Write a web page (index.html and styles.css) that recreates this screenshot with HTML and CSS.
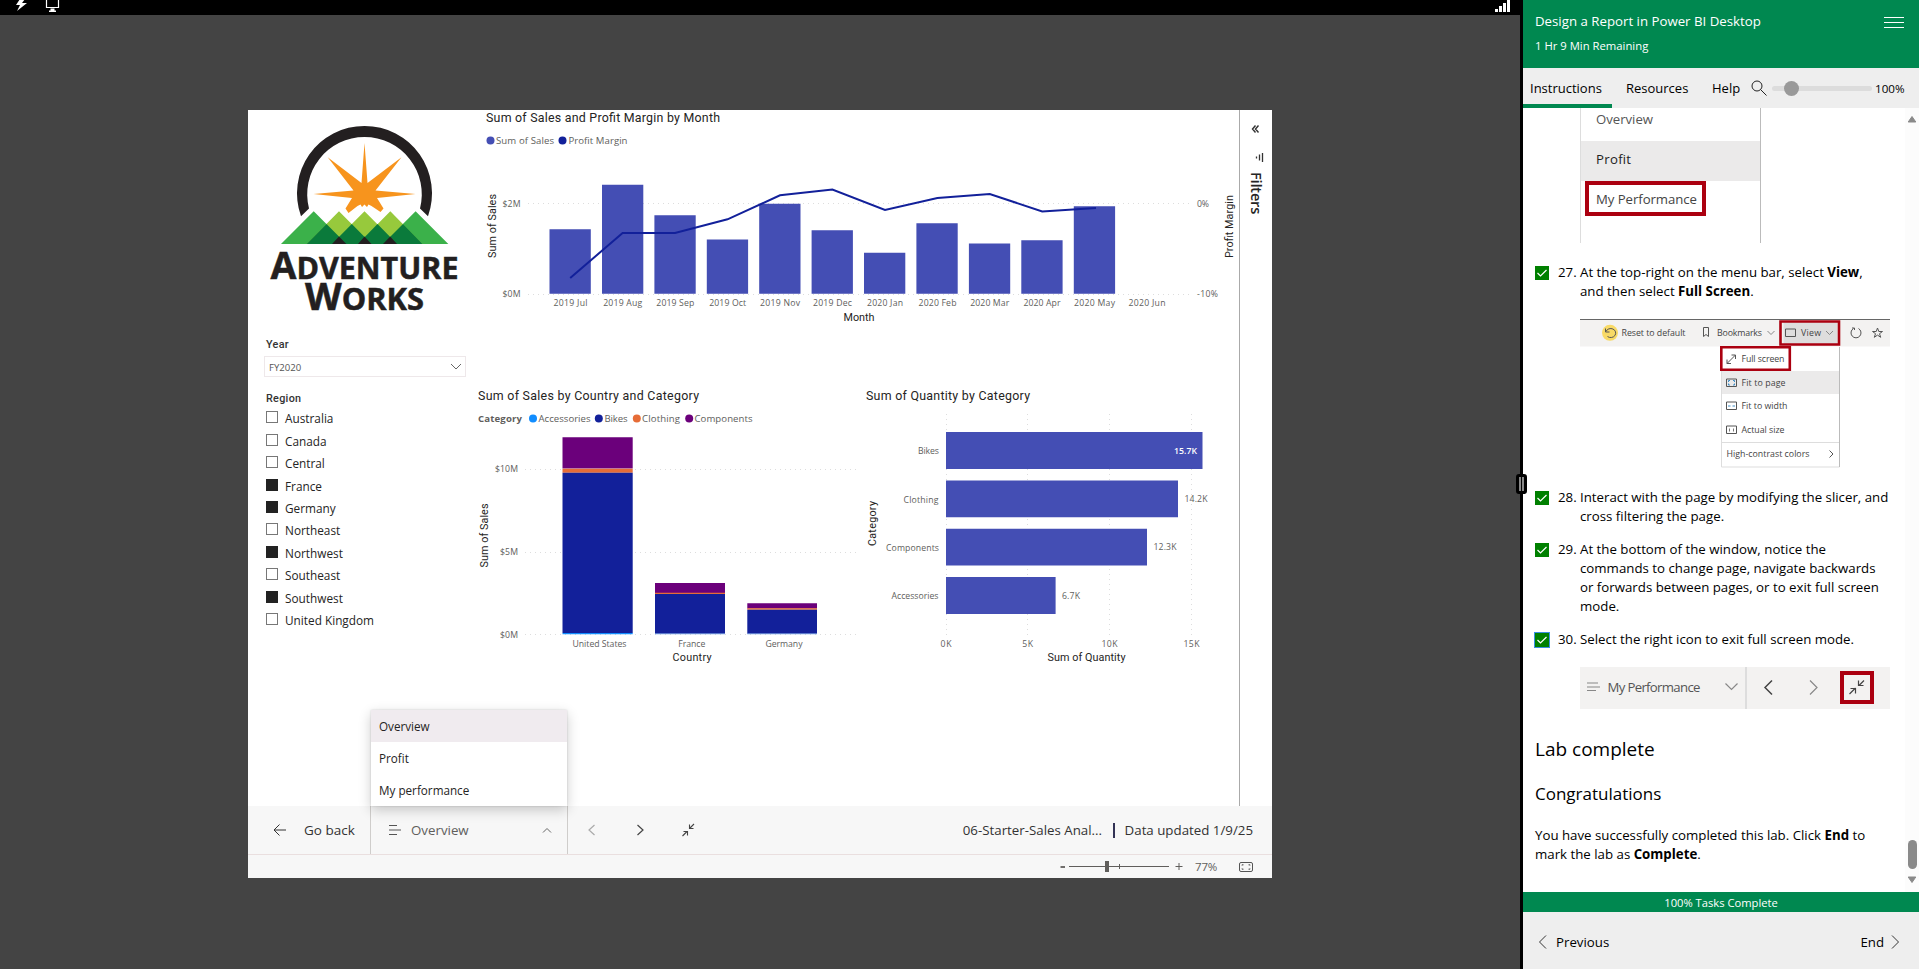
FILE: index.html
```html
<!DOCTYPE html>
<html lang="en">
<head>
<meta charset="utf-8">
<title>Design a Report in Power BI Desktop</title>
<link rel="stylesheet" href="styles.css">
</head>
<body>
<div class="app">
  <section class="machine">
    <div class="machine-bar">
      <svg class="machine-icons" width="60" height="15" viewBox="0 0 60 15">
        <path d="M20 -1 L16 5 H20 L17 11 L27 3 H22 L25 -1Z" fill="#fff"/>
        <path d="M46.5 -1 V7.5 H58.5 V-1" fill="none" stroke="#fff" stroke-width="1.2"/>
        <path d="M50.5 8.500h4v2h1.500v1.500h-7v-1.500h1.500z" fill="#fff"/>
      </svg>
      <svg class="signal" width="18" height="15" viewBox="0 0 18 15" fill="#fff">
        <path d="M1 9h3v3H1zM5 6h3v6H5zM9 3h3v9H9zM13 0h3v12H13z"/>
      </svg>
    </div>
    <div class="desktop">
      <main class="window">
        <div class="report">
          <div class="page">
            <div class="side">
              <svg class="logo" width="230" height="225" viewBox="248 110 230 225" role="img" aria-label="Adventure Works">
                <path d="M301 216.300A67.500 67.500 0 1 1 428 216.300L420 208.500A57.300 57.300 0 1 0 309 208.500Z" fill="#231f20"/>
                <path d="M364.500 143L367.500 183L401.500 157.300L375.500 190.500L415.500 194L377 198L383.500 208.500L380.500 212L371.500 206L368.500 204.500L367 207L364.500 204.500L362 207L360.500 204.500L357.500 206L348.500 213L345.500 208.500L352 198L313.500 194L353.500 190.500L327.700 157.300L361.500 183Z" fill="#f7941d"/>
                <path d="M281 244L313.700 211.300L346.400 244ZM383 244L415.600 211.300L448.300 244Z" fill="#3bb14a"/>
                <path d="M306.700 244L339 211.300L371.500 244ZM332 244L364.500 211.300L397 244ZM358 244L390.300 211.300L422.500 244Z" fill="#97c93c"/>
                <path d="M306.700 244L326.500 224L346.400 244ZM332 244L351.800 224L371.500 244ZM358 244L377.500 224L397 244ZM383 244L403 224L422.500 244Z" fill="#0a7a3b"/>
                <path d="M332 244L339 236.500L346.400 244ZM358 244L364.500 236.500L371.500 244ZM383 244L390.200 236.500L397 244Z" fill="#231f20"/>
                <g class="brand">
                  <text x="270.500" y="278.500" textLength="188" lengthAdjust="spacingAndGlyphs"><tspan class="cap">A</tspan>DVENTURE</text>
                  <text x="305" y="309.500" textLength="119" lengthAdjust="spacingAndGlyphs"><tspan class="cap">W</tspan>ORKS</text>
                </g>
              </svg>
              <div class="slicer-title">Year</div>
              <div class="dropdown"><span>FY2020</span>
                <svg width="12" height="8" viewBox="0 0 12 8"><path d="M1 1l5 5 5-5" fill="none" stroke="#666"/></svg>
              </div>
              <div class="slicer-title region">Region</div>
              <ul class="regions">
                <li><i></i>Australia</li><li><i></i>Canada</li><li><i></i>Central</li>
                <li><i class="on"></i>France</li><li><i class="on"></i>Germany</li><li><i></i>Northeast</li>
                <li><i class="on"></i>Northwest</li><li><i></i>Southeast</li><li><i class="on"></i>Southwest</li>
                <li><i></i>United Kingdom</li>
              </ul>
            </div>
            <div class="charts">
              <svg class="chart" width="761" height="250" viewBox="478 110 761 250">
                <text class="title" x="486" y="122" textLength="234">Sum of Sales and Profit Margin by Month</text>
                <circle cx="490.500" cy="140.500" r="4" fill="#444eb4"/><text class="leg" x="496" y="144.300" textLength="58">Sum of Sales</text>
                <circle cx="562.500" cy="140.500" r="4" fill="#12209a"/><text class="leg" x="568.500" y="144.300" textLength="59">Profit Margin</text>
                <path class="grid" d="M528 203.500H1190M528 294.500H1190"/>
                <g class="lab"><text x="502.500" y="207" textLength="18">$2M</text><text x="502.500" y="297" textLength="18">$0M</text><text x="1197" y="207" textLength="12">0%</text><text x="1197" y="297" textLength="21">-10%</text></g>
                <path fill="#444eb4" d="M549.500 229.300h41.300V293.800h-41.300zM602 184.800h41.300V293.800H602zM654.400 215.300h41.300V293.800h-41.300zM706.800 239.500h41.300V293.800h-41.300zM759.200 203.700h41.300V293.800h-41.300zM811.600 230.300h41.300V293.800h-41.300zM864 252.700h41.300V293.800H864zM916.400 223.300h41.300V293.800h-41.300zM968.900 243.500h41.300V293.800h-41.300zM1021.300 240.200h41.300V293.800h-41.300zM1073.800 206.300h41.300V293.800h-41.300z"/>
                <path d="M570.200 278L622.600 233H675L727.500 219.300L780 195.300L832.400 189.500L885 210L937.400 198L989.800 194L1042.200 211.500L1096 208" fill="none" stroke="#12209a" stroke-width="2"/>
                <g class="lab mid"><text x="570.500" y="306" textLength="34">2019 Jul</text><text x="622.700" y="306" textLength="39">2019 Aug</text><text x="675.300" y="306" textLength="38">2019 Sep</text><text x="727.700" y="306" textLength="37">2019 Oct</text><text x="780" y="306" textLength="40">2019 Nov</text><text x="832.500" y="306" textLength="39">2019 Dec</text><text x="885" y="306" textLength="36">2020 Jan</text><text x="937.500" y="306" textLength="38">2020 Feb</text><text x="989.700" y="306" textLength="39">2020 Mar</text><text x="1042" y="306" textLength="37">2020 Apr</text><text x="1094.500" y="306" textLength="41">2020 May</text><text x="1147" y="306" textLength="37">2020 Jun</text></g>
                <text class="axis" x="843.500" y="321" textLength="31">Month</text>
                <text class="axis" transform="translate(496 258) rotate(-90)" textLength="64">Sum of Sales</text>
                <text class="axis" transform="translate(1233 258) rotate(-90)" textLength="63">Profit Margin</text>
              </svg>
              <div class="chart-row">
                <svg class="chart" width="378" height="300" viewBox="478 380 378 300">
                  <text class="title" x="478" y="400" textLength="221">Sum of Sales by Country and Category</text>
                  <text class="leg bold" x="478" y="422" textLength="44">Category</text>
                  <circle cx="533" cy="418.500" r="4" fill="#118dff"/><text class="leg" x="538.500" y="422" textLength="52">Accessories</text>
                  <circle cx="598.800" cy="418.500" r="4" fill="#12209a"/><text class="leg" x="604.500" y="422" textLength="23">Bikes</text>
                  <circle cx="636.800" cy="418.500" r="4" fill="#e66c37"/><text class="leg" x="642" y="422" textLength="38">Clothing</text>
                  <circle cx="689.200" cy="418.500" r="4" fill="#6b007b"/><text class="leg" x="694.500" y="422" textLength="58">Components</text>
                  <path class="grid" d="M525 469.500H856M525 552.500H856M525 634.500H856"/>
                  <g class="lab"><text x="495" y="472" textLength="23">$10M</text><text x="500" y="555" textLength="18">$5M</text><text x="500" y="638" textLength="18">$0M</text></g>
                  <path fill="#6b007b" d="M562.500 437.200H632.700V468.500H562.500zM655 583H725V593H655zM747.300 603.300H817V608.500H747.300z"/>
                  <path fill="#e66c37" d="M562.500 468.700H632.700V472.700H562.500zM655 592.700H725V594H655zM747.300 608.300H817V609.800H747.300z"/>
                  <path fill="#12209a" d="M562.500 472.700H632.700V633H562.500zM655 594H725V633.700H655zM747.300 609.700H817V633.700H747.300z"/>
                  <path fill="#118dff" d="M562.500 632.900H632.700V634.200H562.500z"/><path fill="#6ea0e6" d="M655 633.500H725V634.200H655zM747.300 633.500H817V634.200H747.300z"/>
                  <g class="lab mid"><text x="599.500" y="647" textLength="54">United States</text><text x="691.800" y="647" textLength="27">France</text><text x="784" y="647" textLength="37">Germany</text></g>
                  <text class="axis" x="672.500" y="661" textLength="39">Country</text>
                  <text class="axis" transform="translate(488 567.500) rotate(-90)" textLength="64">Sum of Sales</text>
                </svg>
                <svg class="chart" width="383" height="300" viewBox="856 380 383 300">
                  <text class="title" x="866" y="400" textLength="164">Sum of Quantity by Category</text>
                  <path class="grid" d="M946.500 414V635M1027.500 414V635M1109.500 414V635M1191.500 414V635"/>
                  <path fill="#444eb4" d="M946 432H1202.500V469H946zM946 480.500H1178V517.300H946zM946 528.700H1147V565.500H946zM946 577H1055.600V614H946z"/>
                  <g class="lab"><text x="918" y="454" textLength="21">Bikes</text><text x="903.500" y="503" textLength="35">Clothing</text><text x="886" y="551" textLength="53">Components</text><text x="891.500" y="599" textLength="47">Accessories</text><text x="1184.500" y="502" textLength="23">14.2K</text><text x="1153.500" y="550" textLength="23">12.3K</text><text x="1062" y="599" textLength="18">6.7K</text><text class="inside" x="1174" y="454" textLength="23">15.7K</text></g>
                  <g class="lab mid"><text x="946" y="647" textLength="11">0K</text><text x="1027.700" y="647" textLength="11">5K</text><text x="1109.500" y="647" textLength="16">10K</text><text x="1191.500" y="647" textLength="16">15K</text></g>
                  <text class="axis" x="1047.500" y="661" textLength="78">Sum of Quantity</text>
                  <text class="axis" transform="translate(876 546) rotate(-90)" textLength="45">Category</text>
                </svg>
              </div>
            </div>
          </div>
          <aside class="filters">
            <svg width="32" height="60" viewBox="0 0 32 60" fill="none" stroke="#333">
              <path d="M15.500 15.500l-3 3.500 3 3.500M18.500 15.500l-3 3.500 3 3.500" stroke-width="1.400"/>
              <path d="M22.500 43v9M19.500 44.500v6M16.500 46.500v2" stroke-width="1.300"/>
            </svg>
            <span>Filters</span>
          </aside>
        </div>
        <nav class="pagebar">
          <div class="back"><svg width="14" height="12" viewBox="0 0 14 12"><path d="M6.500 .500L1 6l5.500 5.500M1 6h12" fill="none" stroke="#333"/></svg><span>Go back</span></div>
          <div class="picker">
            <svg width="14" height="12" viewBox="0 0 14 12"><path d="M1 1.500h8M1 6h12M1 10.500h8" stroke="#555"/></svg>
            <span>Overview</span>
            <svg class="caret" width="10" height="7" viewBox="0 0 10 7"><path d="M1 5.500l4-4 4 4" fill="none" stroke="#666"/></svg>
            <ul class="menu"><li class="sel">Overview</li><li>Profit</li><li>My performance</li></ul>
          </div>
          <svg class="navicons" width="140" height="48" viewBox="568 806 140 48" fill="none">
            <path d="M594.500 825l-5.500 5 5.500 5" stroke="#aaa" stroke-width="1.200"/>
            <path d="M637.500 825l5.500 5-5.500 5" stroke="#444" stroke-width="1.200"/>
            <path d="M694 824l-4.500 4.500M689.500 824.500v4h4M682.500 836l4.500-4.500M683.500 831.500h4v4" stroke="#444" stroke-width="1.100"/>
          </svg>
          <div class="info"><span class="file">06-Starter-Sales Anal...</span><i></i><span class="upd">Data updated 1/9/25</span></div>
        </nav>
        <div class="status">
          <svg width="130" height="23" viewBox="1057 855 130 23" stroke="#605e5c" fill="none">
            <path d="M1060.500 867h4.500" stroke-width="1.800"/><path d="M1069 866.500h100M1119.500 864v5M1175.500 866.500h7M1179 863v7"/><path d="M1105 861h4v11h-4z" fill="#605e5c" stroke="none"/>
          </svg>
          <span>77%</span>
          <svg width="16" height="12" viewBox="0 0 16 12" fill="none" stroke="#555"><rect x="1.500" y="1.500" width="13" height="9" rx="1.500"/><path d="M4 4.500V3.800h1.500M10.500 3.800H12v.700M4 7.500v.700h1.500M10.500 8.200H12v-.700"/></svg>
        </div>
      </main>
    </div>
  </section>
  <div class="splitter"><span></span></div>
  <aside class="lab-panel">
    <header class="lab-head">
      <div><h1>Design a Report in Power BI Desktop</h1><p>1 Hr 9 Min Remaining</p></div>
      <svg width="20" height="12" viewBox="0 0 20 12" stroke="#fff"><path d="M0 .500h20M0 5.500h20M0 10.500h20"/></svg>
    </header>
    <div class="tabs">
      <span class="tab active">Instructions</span><span class="tab res">Resources</span><span class="tab help">Help</span>
      <svg class="mag" width="16" height="16" viewBox="0 0 16 16" fill="none" stroke="#222"><circle cx="6" cy="6" r="5"/><path d="M9.500 9.500L15.500 15.500"/></svg>
      <div class="slider"><i></i></div><span class="pct">100%</span>
    </div>
    <div class="scroll">
      <article class="content">
        <svg class="shot" width="310" height="135" viewBox="1580 108 310 135">
          <path d="M1581 141h179v40h-179z" fill="#ebeaea"/><path d="M1580.500 108v135" stroke="#ddd"/><path d="M1760.500 108v135" stroke="#bbb"/>
          <rect x="1587" y="183" width="117" height="31" fill="none" stroke="#ab0010" stroke-width="4"/>
          <text x="1596" y="124" textLength="57" fill="#555">Overview</text><text x="1596" y="164" textLength="35" fill="#222" font-weight="500">Profit</text><text x="1596" y="204" textLength="101" fill="#444">My Performance</text>
        </svg>
        <div class="step s27"><i class="chk"><svg width="14" height="14" viewBox="0 0 14 14"><path d="M2.500 7l3 3 6-6" fill="none" stroke="#fff" stroke-width="1.200"/></svg></i><b class="num">27.</b><p>At the top-right on the menu bar, select <strong>View</strong>,<br>and then select <strong>Full Screen</strong>.</p></div>
        <svg class="shot menu-shot" width="310" height="152" viewBox="1580 318 310 152">
          <path d="M1580 319h310v27.500h-310z" fill="#f3f2f1"/><path d="M1580 319.500h310" stroke="#666"/>
          <path d="M1783.500 321h54v23h-54z" fill="#dedddd"/>
          <path d="M1721.500 371h118v23h-118z" fill="#ebeaea"/><path d="M1721.500 346v121M1721.500 467h118M1721.500 442.500h118" stroke="#ddd"/><path d="M1839.500 347v120" stroke="#bbb"/>
          <circle cx="1610" cy="332.800" r="8" fill="#f8da66"/>
          <g fill="none" stroke="#555">
            <path d="M1605.500 328.500v3.500h4M1606 331.500a5 4.500 0 1 1 1.500 5" />
            <path d="M1703.500 327.500h5v9l-2.500-2-2.500 2z"/><path d="M1767.500 331l3.500 3.500 3.500-3.500M1826 331l3.500 3.500 3.500-3.500" stroke="#888"/>
            <path d="M1785.500 329h10v7.500h-10z"/>
            <path d="M1853.500 328.500a5 5 0 1 0 5 0M1852 328h2.500v2"/>
            <path d="M1877.500 328l1.300 3.500h3.700l-3 2.200 1.200 3.600-3.200-2.200-3.200 2.200 1.200-3.600-3-2.200h3.700z"/>
            <path d="M1727 363.500l8.500-8.500M1731.500 355h4v4M1727 359.500v4h4"/>
            <path d="M1726.500 379h10v7.500h-10zM1726.500 402h10v7.500h-10zM1726.500 426h10v7.500h-10z"/>
            <path d="M1729.500 428.500v3M1733.500 428.500v3" stroke-width=".800"/>
            <path d="M1829.500 450.500l3.500 3.500-3.500 3.500"/>
            <path stroke="#3e8cc4" d="M1728.500 382v-1.500h1.500M1733 380.500h1.500v1.500M1728.500 383.500v1.500h1.500M1733 385h1.500v-1.500M1728 406h2.500M1732.500 406h2.500"/>
          </g>
          <g class="small"><text x="1621.500" y="336" textLength="64">Reset to default</text><text x="1717" y="336" textLength="45">Bookmarks</text><text x="1801" y="336" textLength="20">View</text><text x="1741.500" y="362" textLength="43">Full screen</text><text x="1741.500" y="386" textLength="44">Fit to page</text><text x="1741.500" y="409" textLength="46">Fit to width</text><text x="1741.500" y="433" textLength="43">Actual size</text><text x="1726.500" y="457" textLength="83">High-contrast colors</text></g>
          <path d="M1780.500 321.500h58.500v23h-58.500zM1721.300 347.300h68.500v22.500h-68.500z" fill="none" stroke="#ab0010" stroke-width="2.600"/>
        </svg>
        <div class="step"><i class="chk"><svg width="14" height="14" viewBox="0 0 14 14"><path d="M2.500 7l3 3 6-6" fill="none" stroke="#fff" stroke-width="1.200"/></svg></i><b class="num">28.</b><p>Interact with the page by modifying the slicer, and<br>cross filtering the page.</p></div>
        <div class="step"><i class="chk"><svg width="14" height="14" viewBox="0 0 14 14"><path d="M2.500 7l3 3 6-6" fill="none" stroke="#fff" stroke-width="1.200"/></svg></i><b class="num">29.</b><p>At the bottom of the window, notice the<br>commands to change page, navigate backwards<br>or forwards between pages, or to exit full screen<br>mode.</p></div>
        <div class="step"><i class="chk focus"><svg width="14" height="14" viewBox="0 0 14 14"><path d="M2.500 7l3 3 6-6" fill="none" stroke="#fff" stroke-width="1.200"/></svg></i><b class="num">30.</b><p>Select the right icon to exit full screen mode.</p></div>
        <svg class="shot bar-shot" width="310" height="42" viewBox="1580 667 310 42">
          <path d="M1580 667h310v42h-310z" fill="#f3f2f1"/><path d="M1746 667v42" stroke="#ddd" stroke-width="2"/>
          <path d="M1587 683h11M1587 687h13M1587 690.500h9" stroke="#888" stroke-width="1.200"/>
          <text x="1607.500" y="692" textLength="93" fill="#555">My Performance</text>
          <g fill="none" stroke-width="1.200"><path d="M1725.500 683.500l6 6 6-6" stroke="#888"/><path d="M1772 680.500l-7 7 7 7" stroke="#444" stroke-width="1.500"/><path d="M1810 680.500l7 7-7 7" stroke="#888"/><path d="M1864 680.500l-5 5M1858.500 680.500v5h5M1849.500 694l6-6M1850.500 688.500h5v5" stroke="#444"/></g>
          <rect x="1842" y="673" width="30" height="29" fill="none" stroke="#ab0010" stroke-width="4"/>
        </svg>
        <h2>Lab complete</h2>
        <h3>Congratulations</h3>
        <p class="done">You have successfully completed this lab. Click <strong>End</strong> to<br>mark the lab as <strong>Complete</strong>.</p>
      </article>
      <div class="scrollbar">
        <svg width="14" height="20" viewBox="0 0 14 20"><path d="M7 8.500l3.800 5.500H3.200z" fill="#8a8a8a" stroke="#8a8a8a" stroke-linejoin="round"/></svg>
        <i></i>
        <svg width="14" height="20" viewBox="0 0 14 20"><path d="M7 11.500L3.200 6h7.600z" fill="#8a8a8a" stroke="#8a8a8a" stroke-linejoin="round"/></svg>
      </div>
    </div>
    <div class="progress">100% Tasks Complete</div>
    <footer class="foot">
      <span class="prev"><svg width="9" height="16" viewBox="0 0 9 16"><path d="M8 1.500L1.500 8 8 14.500" fill="none" stroke="#333"/></svg>Previous</span>
      <span class="end">End<svg width="9" height="16" viewBox="0 0 9 16"><path d="M1 1.500L7.500 8 1 14.500" fill="none" stroke="#333"/></svg></span>
    </footer>
  </aside>
</div>
</body>
</html>
```
FILE: styles.css
```css
* { box-sizing: border-box; }
body { margin: 0; font-family: "Open Sans", "Noto Sans", sans-serif; font-size: 13.2px; color: #000; background: #444; }
h1, h2, h3, p, ul { margin: 0; padding: 0; font-weight: 400; }
ul { list-style: none; }
svg { display: block; flex: none; }
.app { display: flex; width: 1919px; height: 969px; overflow: hidden; }

/* remote machine */
.machine { width: 1520px; display: flex; flex-direction: column; background: #444; }
.machine-bar { height: 15px; background: #000; display: flex; justify-content: space-between; padding-right: 8px; }
.desktop { flex: 1; padding: 95px 0 0 248px; }
.window { width: 1024px; height: 768px; background: #fff; display: flex; flex-direction: column; }
.report { height: 696px; display: flex; }
.page { width: 991px; display: flex; }
.side { width: 230px; }
.brand { font-family: "Open Sans", sans-serif; font-weight: 700; font-size: 30px; fill: #231f20; stroke: #231f20; stroke-width: .5; }
.cap { font-size: 37px; }
.slicer-title { position: relative; font-family: Roboto, sans-serif; font-weight: 500; font-size: 10.8px; line-height: 16px; letter-spacing: .3px; padding: 2px 0 0 18px; color: #333; }
.dropdown { margin: 3px 0 0 16px; width: 202px; height: 21px; border: 1px solid #eee8ea; display: flex; align-items: center; justify-content: space-between; padding: 0 3px 0 4px; font-size: 9.6px; color: #555; }
.dropdown span { padding-top: 2px; }
.region { margin-top: 12px; }
.regions li { display: flex; align-items: center; gap: 7px; height: 22.44px; padding-left: 18px; font-size: 11.8px; color: #252423; }
.regions i { width: 12px; height: 12px; border: 1px solid #777; margin-top: -2px; }
.regions i.on { background: #222; border-color: #222; }
.charts { width: 761px; }
.chart-row { display: flex; margin-top: 20px; }
.title, .axis { font-family: Roboto, sans-serif; fill: #252423; }
.title { font-size: 12.4px; }
.axis { font-size: 10.8px; }
.leg { font-size: 9.6px; fill: #605e5c; }
.bold { font-weight: 700; }
.lab text { font-size: 8.7px; fill: #605e5c; }
.lab .inside { fill: #fff; font-weight: 600; }
.mid text { text-anchor: middle; }
.grid { stroke: #ddd; stroke-dasharray: 1 4; fill: none; }
.filters { width: 33px; border-left: 1px solid #aaa; }
.filters span { display: block; writing-mode: vertical-rl; font-weight: 600; font-size: 14.6px; line-height: 20px; margin: 2px 0 0 7px; letter-spacing: -.2px; color: #252423; }

.pagebar { height: 49px; background: #f7f7f7; border-bottom: 1px solid #eadfdf; display: flex; color: #333; font-size: 13.3px; }
.back { width: 122px; display: flex; align-items: center; padding-left: 25px; }
.back span { margin-left: 17px; font-size: 13.5px; }
.picker { position: relative; width: 198px; border-left: 1px solid #cfcdcb; border-right: 1px solid #cfcdcb; display: flex; align-items: center; padding: 0 15px 0 17px; color: #605e5c; }
.picker span { margin-left: 9px; }
.caret { margin-left: auto; }
.menu { position: absolute; left: 0; bottom: 48px; width: 196px; background: #fff; color: #252423; font-size: 11.7px; box-shadow: 0 4px 12px rgba(0,0,0,.2), 0 0 2px rgba(0,0,0,.15); }
.menu li { height: 32px; line-height: 32px; padding-left: 8px; }
.menu .sel { background: #f0ebef; }
.info { margin-left: auto; padding-right: 19px; display: flex; align-items: center; }
.info i { width: 1.5px; height: 15px; background: #335; margin: 0 10px 0 11px; }
.status { height: 23px; background: #f7f7f7; display: flex; align-items: center; justify-content: flex-end; padding-right: 18px; font-size: 11.5px; color: #605e5c; }
.status span { width: 24px; margin: 0 19px 0 8px; letter-spacing: -.2px; }

/* divider with drag handle */
.splitter { position: relative; width: 3px; background: #000; }
.splitter span { position: absolute; top: 474px; left: -4px; width: 11px; height: 20px; background: #888; border: 3px solid #000; border-radius: 3px; }
.splitter span::after { content: ""; display: block; width: 1px; height: 14px; margin-left: 2px; background: #000; }

/* instructions panel */
.lab-panel { width: 396px; background: #fff; display: flex; flex-direction: column; font-size: 13.28px; }
.lab-head { height: 68px; background: #008850; color: #fff; padding: 12px 15px 0 12px; display: flex; justify-content: space-between; }
.lab-head h1 { font-size: 13.25px; line-height: 18px; }
.lab-head p { font-size: 11.3px; line-height: 16px; margin-top: 8px; }
.lab-head svg { margin-top: 5px; }
.tabs { height: 40px; background: #eee; display: flex; align-items: center; font-size: 13px; }
.tab { height: 40px; line-height: 40px; }
.active { width: 89px; padding-left: 7px; border-bottom: 4px solid #008850; }
.res { margin-left: 14px; width: 86px; }
.help { width: 39px; }
.slider { width: 100px; height: 5px; border-radius: 3px; background: #dcdcdc; margin-left: 5px; position: relative; }
.slider i { position: absolute; left: 12px; top: -5px; width: 15px; height: 15px; border-radius: 50%; background: #999; }
.pct { margin-left: 3px; font-size: 11.6px; }
.scroll { height: 784px; display: flex; }
.content { width: 382px; padding-left: 12px; }
.shot { margin-left: 45px; font-size: 13.2px; }
.small { font-size: 8.8px; fill: #444; }
.step { display: flex; margin-top: 14px; line-height: 19px; white-space: nowrap; }
.s27 { margin-top: 20px; }
.chk { width: 14px; height: 14px; background: #008000; margin-top: 3px; }
.focus { outline: 1px solid #3b8fe0; }
.num { width: 22px; margin: 0 0 0 9px; font-weight: 400; }
.menu-shot { margin-top: 17px; margin-bottom: 18px; }
.bar-shot { margin-top: 18px; }
.content h2 { font-size: 19px; line-height: 26px; margin-top: 27px; }
.content h3 { font-size: 17px; line-height: 24px; margin-top: 20px; }
.done { line-height: 19px; margin-top: 20px; white-space: nowrap; }
.scrollbar { width: 14px; background: #fcfcfc; display: flex; flex-direction: column; align-items: center; }
.scrollbar i { width: 9px; height: 29px; border-radius: 5px; background: #8a8a8a; margin-top: 712px; }
.scrollbar svg:last-child { margin-top: 2px; }
.progress { height: 20px; background: #008850; color: #fff; text-align: center; font-size: 11.2px; line-height: 21px; }
.foot { height: 57px; background: #eee; display: flex; justify-content: space-between; align-items: center; padding: 3px 19px 0 15px; }
.foot span { display: flex; align-items: center; gap: 9px; }
.foot .end { gap: 7px; }
```
